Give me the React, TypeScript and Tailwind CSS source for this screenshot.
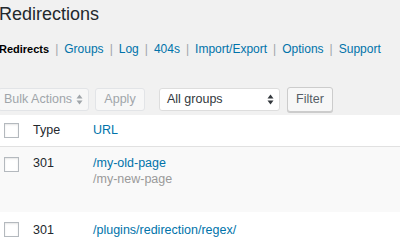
const LINKS = ['Groups', 'Log', '404s', 'Import/Export', 'Options', 'Support'];

function Checkbox() {
  return <div className="w-[15px] h-[15px] border border-[#b4b9be] bg-white shadow-[inset_0_1px_2px_rgba(0,0,0,0.1)]" />;
}

function UpDown({ color }: { color: string }) {
  return (
    <svg width="7" height="11" viewBox="0 0 7 11" className="shrink-0">
      <path d="M3.5 0.5 L6.5 4.5 L0.5 4.5 Z" fill={color} />
      <path d="M3.5 10.5 L6.5 6.5 L0.5 6.5 Z" fill={color} />
    </svg>
  );
}

export default function App() {
  return (
    <div className="w-[400px] h-[240px] overflow-hidden bg-[#f1f1f1] text-[#23282d] font-['Liberation_Sans',Arial,sans-serif]">
      {/* title */}
      <h1 className="-ml-[1px] pt-[2px] text-[18px] leading-[24px] text-[#23282d]">Redirections</h1>

      {/* sub nav */}
      <div className="mt-[15px] -ml-[1px] flex items-center h-[16px] text-[12px] leading-[16px]">
        <span className="font-bold text-[11px] text-black">Redirects</span>
        {LINKS.map((l) => (
          <span key={l} className="flex items-center">
            <span className="mx-[6px] text-[#a0a5aa]">|</span>
            <span className="text-[#0073aa]">{l}</span>
          </span>
        ))}
      </div>

      {/* toolbar */}
      <div className="mt-[31px] flex items-center h-[23px] text-[12.5px]">
        <div className="-ml-[2px] w-[91px] h-[23px] rounded-[3px] border border-[#e2e4e7] bg-[#f7f7f7] flex items-center justify-between pl-[5px] pr-[5px] text-[#a0a5aa]">
          <span>Bulk Actions</span>
          <UpDown color="#a0a5aa" />
        </div>
        <div className="ml-[6px] w-[50px] h-[23px] rounded-[3px] border border-[#e2e4e7] bg-[#f7f7f7] flex items-center justify-center text-[#a0a5aa]">
          Apply
        </div>
        <div className="ml-[14px] w-[121px] h-[23px] rounded-[3px] border border-[#dddddd] bg-white flex items-center justify-between pl-[7px] pr-[5px] text-[#32373c]">
          <span>All groups</span>
          <UpDown color="#32373c" />
        </div>
        <div className="ml-[7px] w-[46px] h-[25px] rounded-[3px] border border-[#cccccc] bg-[#f7f7f7] shadow-[0_1px_0_#cccccc] flex items-center justify-center text-[#555d66]">
          Filter
        </div>
      </div>

      {/* table */}
      <div className="mt-[4px] text-[12.5px]">
        <div className="h-[32px] bg-white border-b border-[#e1e1e1] flex items-center">
          <div className="w-[33px] pl-[4px]"><Checkbox /></div>
          <div className="w-[60px]">Type</div>
          <div className="text-[#0073aa]">URL</div>
        </div>
        <div className="h-[65px] bg-[#f9f9f9] flex items-start pt-[8px]">
          <div className="w-[33px] pl-[4px] pt-[2px]"><Checkbox /></div>
          <div className="w-[60px] leading-[16px]">301</div>
          <div className="leading-[16px]">
            <div className="text-[#0073aa]">/my-old-page</div>
            <div className="text-[#999999]">/my-new-page</div>
          </div>
        </div>
        <div className="h-[40px] bg-white flex items-start pt-[10px]">
          <div className="w-[33px] pl-[4px]"><Checkbox /></div>
          <div className="w-[60px] leading-[16px]">301</div>
          <div className="leading-[16px] text-[#0073aa]">/plugins/redirection/regex/</div>
        </div>
      </div>
    </div>
  );
}
